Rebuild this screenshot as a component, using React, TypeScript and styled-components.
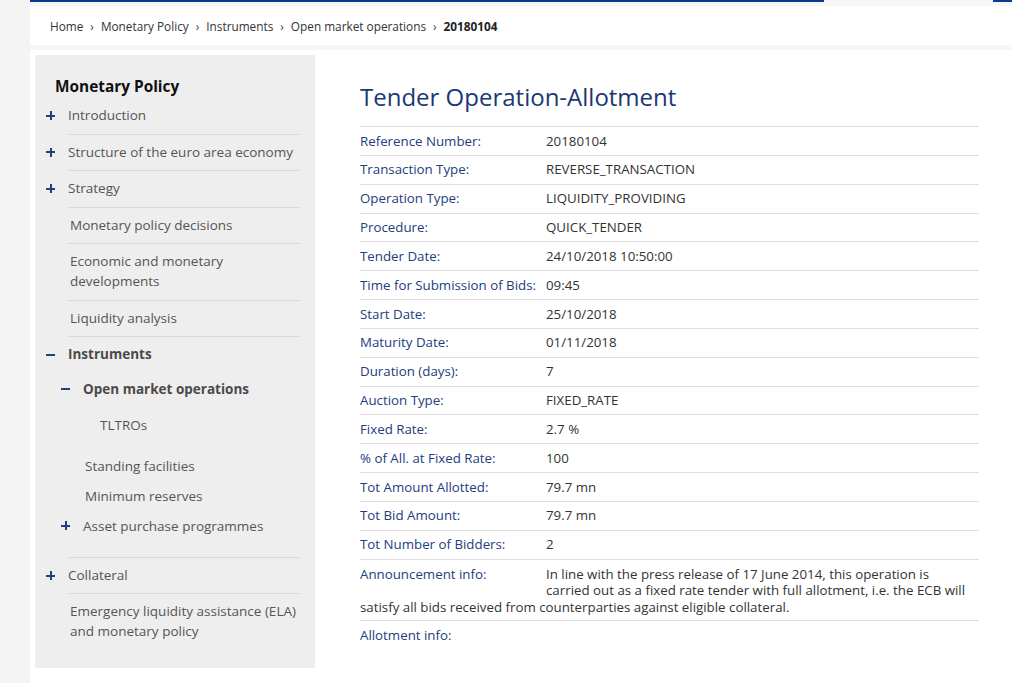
import React from "react";
import styled, { createGlobalStyle } from "styled-components";

const GlobalStyle = createGlobalStyle`
  html, body {
    margin: 0;
    padding: 0;
    background: #ffffff;
    font-family: "Open Sans", "Noto Sans", "Liberation Sans", sans-serif;
  }
  * { box-sizing: border-box; }
`;

type NavItem = {
  label: string;
  sign?: "+" | "-";
  bold?: boolean;
  border?: boolean;
  children?: NavItem[];
};

const nav: NavItem[] = [
  { label: "Introduction", sign: "+", border: true },
  { label: "Structure of the euro area economy", sign: "+", border: true },
  { label: "Strategy", sign: "+", border: true },
  { label: "Monetary policy decisions", border: true },
  { label: "Economic and monetary developments", border: true },
  { label: "Liquidity analysis", border: true },
  {
    label: "Instruments",
    sign: "-",
    bold: true,
    border: true,
    children: [
      {
        label: "Open market operations",
        sign: "-",
        bold: true,
        children: [{ label: "TLTROs" }],
      },
      { label: "Standing facilities" },
      { label: "Minimum reserves" },
      { label: "Asset purchase programmes", sign: "+" },
    ],
  },
  { label: "Collateral", sign: "+", border: true },
  { label: "Emergency liquidity assistance (ELA) and monetary policy" },
];

const rows: [string, string][] = [
  ["Reference Number:", "20180104"],
  ["Transaction Type:", "REVERSE_TRANSACTION"],
  ["Operation Type:", "LIQUIDITY_PROVIDING"],
  ["Procedure:", "QUICK_TENDER"],
  ["Tender Date:", "24/10/2018 10:50:00"],
  ["Time for Submission of Bids:", "09:45"],
  ["Start Date:", "25/10/2018"],
  ["Maturity Date:", "01/11/2018"],
  ["Duration (days):", "7"],
  ["Auction Type:", "FIXED_RATE"],
  ["Fixed Rate:", "2.7 %"],
  ["% of All. at Fixed Rate:", "100"],
  ["Tot Amount Allotted:", "79.7 mn"],
  ["Tot Bid Amount:", "79.7 mn"],
  ["Tot Number of Bidders:", "2"],
];

const crumbs = ["Home", "Monetary Policy", "Instruments", "Open market operations"];

// vertical padding of a nav label, by depth
const padFor = (depth: number, label: string) =>
  depth === 0 ? 8 : label === "Open market operations" ? 6 : 5;

function NavList({ items, depth }: { items: NavItem[]; depth: number }) {
  const lh = depth === 0 ? 19.6 : 20;
  return (
    <List $depth={depth}>
      {items.map((item) => {
        const pad = padFor(depth, item.label);
        return (
          <Item key={item.label}>
            <SignCol $pad={pad} $lh={lh}>
              {item.sign && <Sign $plus={item.sign === "+"} />}
            </SignCol>
            <Body $border={!!item.border}>
              <Label $pad={pad} $lh={lh} $bold={!!item.bold} $noSign={!item.sign}>
                {item.label}
              </Label>
              {item.children && <NavList items={item.children} depth={depth + 1} />}
            </Body>
          </Item>
        );
      })}
    </List>
  );
}

export default function App() {
  return (
    <>
      <GlobalStyle />
      <Page>
        <LeftStrip />
        <Main>
          <TopBar>
            <BlueLine $w={794} />
            <GreyGap />
            <BlueLine $w={19} />
          </TopBar>
          <Breadcrumb>
            {crumbs.map((c) => (
              <React.Fragment key={c}>
                <Crumb>{c}</Crumb>
                <CrumbSep>›</CrumbSep>
              </React.Fragment>
            ))}
            <Crumb $current>20180104</Crumb>
          </Breadcrumb>
          <Band />
          <Columns>
            <Sidebar>
              <SideTitle>Monetary Policy</SideTitle>
              <NavList items={nav} depth={0} />
            </Sidebar>
            <Content>
              <Title>Tender Operation-Allotment</Title>
              <DataTable>
                {rows.map(([k, v]) => (
                  <Row key={k}>
                    <Key>{k}</Key>
                    <Val>{v}</Val>
                  </Row>
                ))}
                <TextRow>
                  <FloatKey>Announcement info:</FloatKey>
                  In line with the press release of 17 June 2014, this operation is carried out as a fixed rate
                  tender with full allotment, i.e. the ECB will satisfy all bids received from counterparties
                  against eligible collateral.
                </TextRow>
                <Row>
                  <Key>Allotment info:</Key>
                  <Val />
                </Row>
              </DataTable>
            </Content>
          </Columns>
        </Main>
      </Page>
    </>
  );
}

const Page = styled.div`
  display: flex;
  min-height: 683px;
`;

const LeftStrip = styled.div`
  width: 30px;
  flex: none;
  background: #f4f4f4;
`;

const Main = styled.div`
  flex: 1;
  display: flex;
  flex-direction: column;
  background: #ffffff;
`;

const TopBar = styled.div`
  display: flex;
  height: 6px;
  background: #f6f6f8;
  align-items: flex-start;
`;

const BlueLine = styled.div<{ $w: number }>`
  width: ${(p) => p.$w}px;
  height: 2px;
  background: #0b3a8f;
`;

const GreyGap = styled.div`
  flex: 1;
`;

const Breadcrumb = styled.nav`
  height: 39px;
  display: flex;
  align-items: center;
  padding-left: 20px;
  font-size: 11.8px;
  color: #333333;
`;

const Crumb = styled.span<{ $current?: boolean }>`
  font-weight: ${(p) => (p.$current ? 700 : 400)};
  color: ${(p) => (p.$current ? "#222222" : "#333333")};
`;

const CrumbSep = styled.span`
  margin: 0 7px;
  color: #444444;
`;

const Band = styled.div`
  height: 5px;
  background: #f6f6f6;
`;

const Columns = styled.div`
  display: flex;
  align-items: flex-start;
  padding: 5px 0 0 5px;
`;

const Sidebar = styled.aside`
  width: 280px;
  flex: none;
  background: #eeeeee;
  padding: 21px 15px 18px 11px;
`;

const SideTitle = styled.h2`
  margin: 0 0 0 9px;
  font-size: 15.4px;
  line-height: 22px;
  font-weight: 700;
  color: #111111;
`;

const List = styled.ul<{ $depth: number }>`
  list-style: none;
  margin: 0 0 0 ${(p) => (p.$depth === 0 ? 0 : -7)}px;
  padding: ${(p) => (p.$depth === 1 ? "0 0 16px" : p.$depth === 2 ? "6px 0 11px" : "0")};
`;

const Item = styled.li`
  display: flex;
  align-items: flex-start;
`;

const SignCol = styled.div<{ $pad: number; $lh: number }>`
  width: 22px;
  flex: none;
  height: ${(p) => p.$pad + p.$lh}px;
  padding-top: ${(p) => p.$pad}px;
  display: flex;
  align-items: center;
`;

const Sign = styled.span<{ $plus: boolean }>`
  position: relative;
  display: block;
  width: 9px;
  height: 20px;

  &::before {
    content: "";
    position: absolute;
    left: 0;
    top: 9px;
    width: 9px;
    height: 2px;
    background: #23407e;
  }

  &::after {
    content: "";
    display: ${(p) => (p.$plus ? "block" : "none")};
    position: absolute;
    left: 3.5px;
    top: 5.5px;
    width: 2px;
    height: 9px;
    background: #23407e;
  }
`;

const Body = styled.div<{ $border: boolean }>`
  flex: 1;
  min-width: 0;
  border-bottom: ${(p) => (p.$border ? "1px solid #d9d9d9" : "none")};
`;

const Label = styled.div<{ $pad: number; $lh: number; $bold: boolean; $noSign: boolean }>`
  padding: ${(p) => p.$pad}px 0 ${(p) => (p.$pad === 6 ? 5 : p.$pad)}px ${(p) => (p.$noSign ? 2 : 0)}px;
  font-size: 13.5px;
  line-height: ${(p) => p.$lh}px;
  font-weight: ${(p) => (p.$bold ? 700 : 400)};
  color: ${(p) => (p.$bold ? "#4a4a4a" : "#555555")};
`;

const Content = styled.main`
  width: 619px;
  margin-left: 45px;
`;

const Title = styled.h1`
  margin: 27px 0 14px;
  font-size: 24px;
  line-height: 30px;
  font-weight: 400;
  color: #1b3775;
`;

const DataTable = styled.div`
  display: flex;
  flex-direction: column;
  font-size: 13.3px;
`;

const Row = styled.div`
  display: flex;
  border-top: 1px solid #dddddd;
  padding: 4.5px 0 3.5px;
  line-height: 19.85px;
`;

const Key = styled.div`
  width: 186px;
  flex: none;
  color: #23407e;
`;

const Val = styled.div`
  flex: 1;
  color: #333333;
`;

const TextRow = styled.div`
  border-top: 1px solid #dddddd;
  padding: 6px 4px 5px 0;
  line-height: 16.5px;
  color: #333333;

  &::after {
    content: "";
    display: block;
    clear: both;
  }
`;

const FloatKey = styled.span`
  float: left;
  width: 186px;
  padding-bottom: 10px;
  color: #23407e;
`;
